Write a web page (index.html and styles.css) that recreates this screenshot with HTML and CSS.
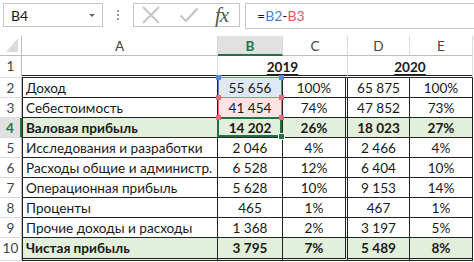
FILE: index.html
```html
<!DOCTYPE html>
<html lang="ru">
<head>
    <meta charset="UTF-8">
    <meta name="viewport" content="width=device-width, initial-scale=1.0">
    <title>Валовая прибыль</title>
    <link rel="stylesheet" href="styles.css">
</head>
<body>
    <div class="toolbar">
        <div class="name-box">
            <span>B4</span>
            <span class="caret"></span>
        </div>
        <div class="grip"><span></span><span></span><span></span></div>
        <div class="fx-buttons">
            <svg class="icon" width="20" height="18" viewBox="0 0 20 18">
                <path d="M2 1 L18 17 M18 1 L2 17" stroke="#c4c4c4" stroke-width="1.8" fill="none"/>
            </svg>
            <svg class="icon" width="20" height="16" viewBox="0 0 20 16">
                <path d="M1.5 8.5 L7 14 L18.5 1.5" stroke="#c4c4c4" stroke-width="2.2" fill="none"/>
            </svg>
            <span class="fx">fx</span>
        </div>
        <div class="formula">=<span class="ref-blue">B2</span>-<span class="ref-red">B3</span></div>
    </div>

    <div class="sheet">
        <!-- column headers -->
        <div class="corner"><span class="corner-mark"></span></div>
        <div class="col-h">A</div>
        <div class="col-h col-active">B</div>
        <div class="col-h">C</div>
        <div class="col-h">D</div>
        <div class="col-h">E</div>

        <!-- row 1 -->
        <div class="row-h">1</div>
        <div class="top"></div>
        <div class="top year span2">2019</div>
        <div class="top year span2">2020</div>

        <!-- row 2 -->
        <div class="row-h">2</div>
        <div class="cell label">Доход</div>
        <div class="cell num mark-blue">55&nbsp;656
            <i class="dot tl blue"></i><i class="dot tr blue"></i>
        </div>
        <div class="cell num sep">100%</div>
        <div class="cell num">65&nbsp;875</div>
        <div class="cell num">100%</div>

        <!-- row 3 -->
        <div class="row-h">3</div>
        <div class="cell label">Себестоимость</div>
        <div class="cell num mark-red">41&nbsp;454
            <i class="dot tl red"></i><i class="dot tr red"></i>
            <i class="dot bl red"></i><i class="dot br red"></i>
        </div>
        <div class="cell num sep">74%</div>
        <div class="cell num">47&nbsp;852</div>
        <div class="cell num">73%</div>

        <!-- row 4 -->
        <div class="row-h row-active">4</div>
        <div class="cell label total">Валовая прибыль</div>
        <div class="cell num total active">14&nbsp;202
            <i class="fill-handle"></i>
        </div>
        <div class="cell num total sep">26%</div>
        <div class="cell num total">18&nbsp;023</div>
        <div class="cell num total">27%</div>

        <!-- row 5 -->
        <div class="row-h">5</div>
        <div class="cell label">Исследования и разработки</div>
        <div class="cell num">2&nbsp;046</div>
        <div class="cell num sep">4%</div>
        <div class="cell num">2&nbsp;466</div>
        <div class="cell num">4%</div>

        <!-- row 6 -->
        <div class="row-h">6</div>
        <div class="cell label">Расходы общие и администр.</div>
        <div class="cell num">6&nbsp;528</div>
        <div class="cell num sep">12%</div>
        <div class="cell num">6&nbsp;404</div>
        <div class="cell num">10%</div>

        <!-- row 7 -->
        <div class="row-h">7</div>
        <div class="cell label">Операционная прибыль</div>
        <div class="cell num">5&nbsp;628</div>
        <div class="cell num sep">10%</div>
        <div class="cell num">9&nbsp;153</div>
        <div class="cell num">14%</div>

        <!-- row 8 -->
        <div class="row-h">8</div>
        <div class="cell label">Проценты</div>
        <div class="cell num">465</div>
        <div class="cell num sep">1%</div>
        <div class="cell num">467</div>
        <div class="cell num">1%</div>

        <!-- row 9 -->
        <div class="row-h">9</div>
        <div class="cell label">Прочие доходы и расходы</div>
        <div class="cell num">1&nbsp;368</div>
        <div class="cell num sep">2%</div>
        <div class="cell num">3&nbsp;197</div>
        <div class="cell num">5%</div>

        <!-- row 10 -->
        <div class="row-h">10</div>
        <div class="cell label total last">Чистая прибыль</div>
        <div class="cell num total last">3&nbsp;795</div>
        <div class="cell num total last sep">7%</div>
        <div class="cell num total last">5&nbsp;489</div>
        <div class="cell num total last">8%</div>
    </div>
</body>
</html>
```

FILE: styles.css
```css
body {
    margin: 0;
    width: 474px;
    height: 262px;
    overflow: hidden;
    background: #fff;
    font-family: Lato, "Liberation Sans", sans-serif;
    color: #1a1a1a;
}

/* formula bar */

.toolbar {
    display: flex;
    align-items: flex-start;
    height: 36px;
    padding: 3px 0 0 3px;
    box-sizing: border-box;
}

.name-box {
    display: flex;
    align-items: center;
    justify-content: space-between;
    width: 100px;
    height: 24px;
    padding: 0 7px 0 7px;
    box-sizing: border-box;
    border: 1px solid #c6c6c6;
    font-size: 14px;
}

.caret {
    width: 0;
    height: 0;
    border-left: 3px solid transparent;
    border-right: 3px solid transparent;
    border-top: 3px solid #666;
}

.grip {
    display: flex;
    flex-direction: column;
    gap: 2px;
    width: 30px;
    height: 24px;
    align-items: center;
    justify-content: center;
}

.grip span {
    width: 2px;
    height: 2px;
    background: #9a9a9a;
}

.fx-buttons {
    display: flex;
    align-items: center;
    width: 107px;
    height: 24px;
    padding-left: 7px;
    gap: 18px;
    box-sizing: border-box;
    border: 1px solid #c6c6c6;
}

.fx {
    font-family: "Liberation Serif", serif;
    font-style: italic;
    font-size: 21px;
    color: #555;
    letter-spacing: -1px;
    margin-left: -2px;
}

.formula {
    flex: 1;
    height: 24px;
    margin-left: 5px;
    padding-left: 11px;
    border: 1px solid #c6c6c6;
    border-right: none;
    font-size: 14px;
    line-height: 23px;
}

.ref-blue {
    color: #4a7fd6;
}

.ref-red {
    color: #dc5a64;
}

/* sheet grid */

.sheet {
    display: grid;
    grid-template-columns: 22px 196px 65px 65px 62px 63px;
    grid-template-rows: 20px 22px repeat(8, 20px) 23px;
    font-size: 13.6px;
    white-space: nowrap;
}

.sheet > div {
    box-sizing: border-box;
    line-height: 20px;
}

.corner {
    display: flex;
    align-items: flex-end;
    justify-content: flex-end;
    padding: 0 3px 3px 0;
    border-right: 1px solid #bdbdbd;
    border-bottom: 1px solid #bdbdbd;
}

.corner-mark {
    width: 0;
    height: 0;
    border-left: 12px solid transparent;
    border-bottom: 14px solid #dcdcdc;
}

.col-h {
    text-align: center;
    color: #444;
    border-right: 1px solid #dadada;
    border-bottom: 1px solid #bdbdbd;
}

.col-active {
    background: #e1e1e1;
    color: #217346;
    font-weight: bold;
    border-bottom: 2px solid #217346;
}

.row-h {
    text-align: center;
    color: #444;
    border-right: 1px solid #bdbdbd;
    border-bottom: 1px solid #dadada;
}

.row-active {
    background: #e1e1e1;
    color: #217346;
    font-weight: bold;
    border-right: 2px solid #217346;
}

.top {
    border-right: 1px solid #dadada;
    border-bottom: 3px double #222;
    padding-top: 1px;
}

.span2 {
    grid-column: span 2;
}

.year {
    text-align: center;
    font-weight: bold;
    text-decoration: underline;
    text-underline-offset: 2px;
}

.cell {
    position: relative;
    border-right: 1px solid #222;
    border-bottom: 1px solid #222;
}

.label {
    padding-left: 3px;
    border-left: 1px solid #222;
}

.num {
    text-align: center;
}

.sep {
    border-right: 3px double #222;
}

.total {
    background: #e2efda;
    font-weight: bold;
}

.last {
    border-bottom: 3px double #222;
}

/* formula references and the active cell */

.mark-blue {
    background: #dfe8f7;
}

.mark-blue::after,
.mark-red::after {
    content: "";
    position: absolute;
    top: -1px;
    left: 0;
    right: 0;
    bottom: -1px;
    border: 1px solid #5a8ad8;
}

.mark-red {
    background: #fbe4e4;
}

.mark-red::after {
    border-color: #e0707a;
}

.active::after {
    content: "";
    position: absolute;
    top: -1px;
    left: -1px;
    right: 0;
    bottom: 0;
    border: 2px solid #217346;
}

.dot {
    position: absolute;
    z-index: 2;
    width: 5px;
    height: 5px;
}

.dot.blue {
    background: #5a8ad8;
}

.dot.red {
    background: #e0707a;
}

.tl {
    top: -3px;
    left: -2px;
}

.tr {
    top: -3px;
    right: -2px;
}

.bl {
    bottom: -3px;
    left: -2px;
}

.br {
    bottom: -3px;
    right: -2px;
}

.fill-handle {
    position: absolute;
    z-index: 2;
    right: -3px;
    bottom: -3px;
    width: 5px;
    height: 5px;
    background: #217346;
    border: 1px solid #fff;
}
```
